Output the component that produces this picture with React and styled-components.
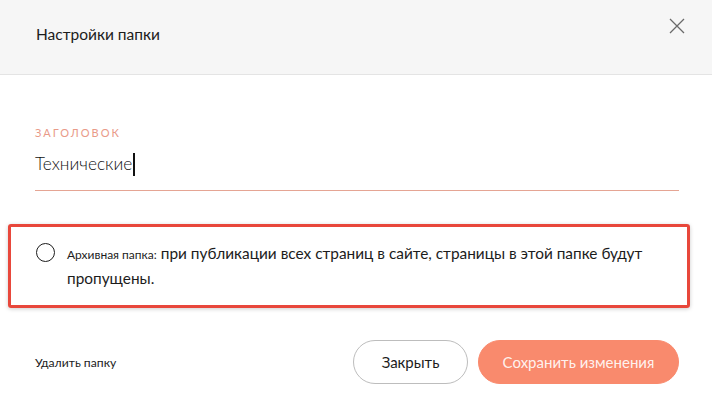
import React from "react";
import styled, { createGlobalStyle } from "styled-components";

const GlobalStyle = createGlobalStyle`
  html, body {
    margin: 0;
    padding: 0;
    background: #fff;
  }
  body {
    font-family: Lato, "Noto Sans", sans-serif;
    color: #1c1c1c;
  }
`;

const Dialog = styled.div`
  width: 712px;
  height: 401px;
  display: flex;
  flex-direction: column;
  background: #fff;
  overflow: hidden;
`;

const Header = styled.div`
  height: 75px;
  flex: none;
  box-sizing: border-box;
  display: flex;
  align-items: center;
  justify-content: space-between;
  padding: 0 24px 6px 36px;
  background: #f6f6f6;
  border-bottom: 1px solid #e4e4e4;
`;

const Title = styled.h1`
  margin: 0;
  font-size: 15.5px;
  font-weight: 400;
  color: #1c1c1c;
`;

const CloseButton = styled.button`
  width: 22px;
  height: 22px;
  padding: 0;
  border: none;
  background: none;
  display: flex;
  align-items: center;
  justify-content: center;
  cursor: pointer;
  margin-top: -16px;
`;

const Body = styled.div`
  flex: 1;
  display: flex;
  flex-direction: column;
  padding-top: 51px;
`;

const Field = styled.div`
  margin: 0 33px 0 35px;
  border-bottom: 1px solid #e5a594;
  padding-bottom: 14px;
`;

const Label = styled.div`
  font-size: 11px;
  letter-spacing: 2px;
  text-transform: uppercase;
  color: #e99a88;
  line-height: 14px;
`;

const Value = styled.div`
  margin-top: 12px;
  font-size: 17.3px;
  font-weight: 300;
  line-height: 24px;
  color: #111;
  display: flex;
  align-items: center;
`;

const Caret = styled.span`
  display: inline-block;
  width: 1.5px;
  height: 23px;
  background: #111;
  margin-left: 1px;
`;

const Highlight = styled.div`
  margin: 33px 22px 0 8px;
  height: 84px;
  box-sizing: border-box;
  border: 3px solid #e8473b;
  border-radius: 3px;
  box-shadow: 0 1px 4px rgba(0, 0, 0, 0.2);
  display: flex;
  align-items: flex-start;
  padding: 14px 18px 0 25px;
  gap: 12px;
`;

const Radio = styled.span`
  flex: none;
  width: 17px;
  height: 17px;
  border: 1.5px solid #1c1c1c;
  border-radius: 50%;
  margin-top: 2px;
`;

const CheckText = styled.p`
  margin: 0;
  font-size: 15.4px;
  line-height: 25px;
  color: #1c1c1c;
`;

const Strong = styled.span`
  display: inline-block;
  font-size: 12px;
  line-height: 1;
  margin-right: 4px;
`;

const Footer = styled.div`
  margin: 32px 33px 0 35px;
  display: flex;
  align-items: center;
  gap: 10px;
`;

const DeleteLink = styled.span`
  font-size: 12.2px;
  color: #1c1c1c;
  margin-right: auto;
`;

const Button = styled.button`
  height: 44px;
  border-radius: 22px;
  font-family: inherit;
  font-size: 15px;
  cursor: pointer;
  padding: 0;
  width: ${(p) => p.$width}px;
  border: 1px solid ${(p) => (p.$primary ? "#f98a6d" : "#bdbdbd")};
  background: ${(p) => (p.$primary ? "#f98a6d" : "#fff")};
  color: ${(p) => (p.$primary ? "rgba(255,255,255,0.9)" : "#1c1c1c")};
`;

export default function App() {
  return (
    <>
      <GlobalStyle />
      <Dialog>
        <Header>
          <Title>Настройки папки</Title>
          <CloseButton aria-label="Закрыть">
            <svg width="16" height="16" viewBox="0 0 16 16">
              <path d="M1 1 L15 15 M15 1 L1 15" stroke="#6a6a6a" strokeWidth="1.3" />
            </svg>
          </CloseButton>
        </Header>
        <Body>
          <Field>
            <Label>Заголовок</Label>
            <Value>
              Технические
              <Caret />
            </Value>
          </Field>
          <Highlight>
            <Radio />
            <CheckText>
              <Strong>Архивная папка:</Strong>
              <span>при публикации всех страниц в сайте, страницы в этой папке будут</span>
              <br />
              <span>пропущены.</span>
            </CheckText>
          </Highlight>
          <Footer>
            <DeleteLink>Удалить папку</DeleteLink>
            <Button $width={115}>Закрыть</Button>
            <Button $primary $width={201}>Сохранить изменения</Button>
          </Footer>
        </Body>
      </Dialog>
    </>
  );
}
